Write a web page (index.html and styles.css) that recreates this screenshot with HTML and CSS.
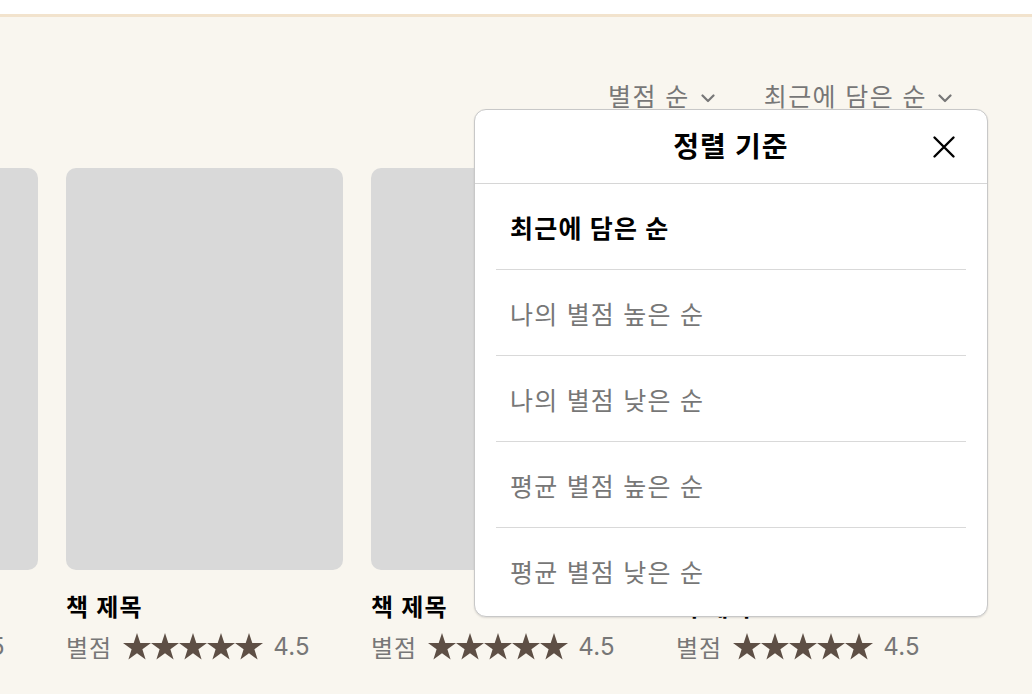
FILE: index.html
```html
<!DOCTYPE html>
<html lang="ko">
<head>
<meta charset="utf-8">
<title>정렬 기준</title>
<link rel="stylesheet" href="styles.css">
</head>
<body>
<div class="top-gap"></div>
<main class="page">
  <div class="toolbar">
    <button class="sort-btn"><span>별점 순</span>
      <svg class="chev" viewBox="0 0 14 9" width="14" height="9"><path d="M1.5 1.5 L7 7 L12.5 1.5" fill="none" stroke="currentColor" stroke-width="2.2" stroke-linecap="round" stroke-linejoin="round"/></svg>
    </button>
    <button class="sort-btn"><span>최근에 담은 순</span>
      <svg class="chev" viewBox="0 0 14 9" width="14" height="9"><path d="M1.5 1.5 L7 7 L12.5 1.5" fill="none" stroke="currentColor" stroke-width="2.2" stroke-linecap="round" stroke-linejoin="round"/></svg>
    </button>
  </div>

  <div class="shelf">
    <div class="track">
      <div class="book">
        <div class="cover"></div>
        <div class="title">책 제목</div>
        <div class="rating"><span class="label">별점</span><svg class="stars" viewBox="0 0 140 27" width="140" height="27"><g fill="#5e4f45"><polygon points="14,0 17.3,10 28,10 19.4,16.3 22.6,26.6 14,20.3 5.4,26.6 8.6,16.3 0,10 10.7,10"/><polygon transform="translate(28 0)" points="14,0 17.3,10 28,10 19.4,16.3 22.6,26.6 14,20.3 5.4,26.6 8.6,16.3 0,10 10.7,10"/><polygon transform="translate(56 0)" points="14,0 17.3,10 28,10 19.4,16.3 22.6,26.6 14,20.3 5.4,26.6 8.6,16.3 0,10 10.7,10"/><polygon transform="translate(84 0)" points="14,0 17.3,10 28,10 19.4,16.3 22.6,26.6 14,20.3 5.4,26.6 8.6,16.3 0,10 10.7,10"/><polygon transform="translate(112 0)" points="14,0 17.3,10 28,10 19.4,16.3 22.6,26.6 14,20.3 5.4,26.6 8.6,16.3 0,10 10.7,10"/></g></svg><span class="score">4.5</span></div>
      </div>
      <div class="book">
        <div class="cover"></div>
        <div class="title">책 제목</div>
        <div class="rating"><span class="label">별점</span><svg class="stars" viewBox="0 0 140 27" width="140" height="27"><g fill="#5e4f45"><polygon points="14,0 17.3,10 28,10 19.4,16.3 22.6,26.6 14,20.3 5.4,26.6 8.6,16.3 0,10 10.7,10"/><polygon transform="translate(28 0)" points="14,0 17.3,10 28,10 19.4,16.3 22.6,26.6 14,20.3 5.4,26.6 8.6,16.3 0,10 10.7,10"/><polygon transform="translate(56 0)" points="14,0 17.3,10 28,10 19.4,16.3 22.6,26.6 14,20.3 5.4,26.6 8.6,16.3 0,10 10.7,10"/><polygon transform="translate(84 0)" points="14,0 17.3,10 28,10 19.4,16.3 22.6,26.6 14,20.3 5.4,26.6 8.6,16.3 0,10 10.7,10"/><polygon transform="translate(112 0)" points="14,0 17.3,10 28,10 19.4,16.3 22.6,26.6 14,20.3 5.4,26.6 8.6,16.3 0,10 10.7,10"/></g></svg><span class="score">4.5</span></div>
      </div>
      <div class="book">
        <div class="cover"></div>
        <div class="title">책 제목</div>
        <div class="rating"><span class="label">별점</span><svg class="stars" viewBox="0 0 140 27" width="140" height="27"><g fill="#5e4f45"><polygon points="14,0 17.3,10 28,10 19.4,16.3 22.6,26.6 14,20.3 5.4,26.6 8.6,16.3 0,10 10.7,10"/><polygon transform="translate(28 0)" points="14,0 17.3,10 28,10 19.4,16.3 22.6,26.6 14,20.3 5.4,26.6 8.6,16.3 0,10 10.7,10"/><polygon transform="translate(56 0)" points="14,0 17.3,10 28,10 19.4,16.3 22.6,26.6 14,20.3 5.4,26.6 8.6,16.3 0,10 10.7,10"/><polygon transform="translate(84 0)" points="14,0 17.3,10 28,10 19.4,16.3 22.6,26.6 14,20.3 5.4,26.6 8.6,16.3 0,10 10.7,10"/><polygon transform="translate(112 0)" points="14,0 17.3,10 28,10 19.4,16.3 22.6,26.6 14,20.3 5.4,26.6 8.6,16.3 0,10 10.7,10"/></g></svg><span class="score">4.5</span></div>
      </div>
      <div class="book">
        <div class="cover"></div>
        <div class="title">책 제목</div>
        <div class="rating"><span class="label">별점</span><svg class="stars" viewBox="0 0 140 27" width="140" height="27"><g fill="#5e4f45"><polygon points="14,0 17.3,10 28,10 19.4,16.3 22.6,26.6 14,20.3 5.4,26.6 8.6,16.3 0,10 10.7,10"/><polygon transform="translate(28 0)" points="14,0 17.3,10 28,10 19.4,16.3 22.6,26.6 14,20.3 5.4,26.6 8.6,16.3 0,10 10.7,10"/><polygon transform="translate(56 0)" points="14,0 17.3,10 28,10 19.4,16.3 22.6,26.6 14,20.3 5.4,26.6 8.6,16.3 0,10 10.7,10"/><polygon transform="translate(84 0)" points="14,0 17.3,10 28,10 19.4,16.3 22.6,26.6 14,20.3 5.4,26.6 8.6,16.3 0,10 10.7,10"/><polygon transform="translate(112 0)" points="14,0 17.3,10 28,10 19.4,16.3 22.6,26.6 14,20.3 5.4,26.6 8.6,16.3 0,10 10.7,10"/></g></svg><span class="score">4.5</span></div>
      </div>
    </div>
  </div>

  <section class="sort-modal" role="dialog" aria-label="정렬 기준">
    <header class="modal-head">
      <h2 class="modal-title">정렬 기준</h2>
      <button class="close-btn" aria-label="닫기">
        <svg viewBox="0 0 24 24" width="24" height="24"><path d="M2.5 2.5 L21.5 21.5 M21.5 2.5 L2.5 21.5" fill="none" stroke="#000" stroke-width="2.4" stroke-linecap="round"/></svg>
      </button>
    </header>
    <ul class="options">
      <li class="option active">최근에 담은 순</li>
      <li class="option">나의 별점 높은 순</li>
      <li class="option">나의 별점 낮은 순</li>
      <li class="option">평균 별점 높은 순</li>
      <li class="option">평균 별점 낮은 순</li>
    </ul>
  </section>
</main>
</body>
</html>
```
FILE: styles.css
```css
* { box-sizing: border-box; }

html, body {
  margin: 0;
  padding: 0;
  background: #ffffff;
  overflow: hidden;
  height: 100%;
}

body {
  font-family: Inter, "Noto Sans CJK KR", sans-serif;
  color: #000;
}

.top-gap {
  height: 14px;
  background: #ffffff;
}

.page {
  position: relative;
  border-top: 3px solid #f2e3cd;
  background: #f9f6ef;
  height: calc(100% - 14px);
  overflow: hidden;
}

.toolbar {
  display: flex;
  justify-content: flex-end;
  align-items: center;
  gap: 49px;
  padding: 64px 80px 0 0;
  height: 96px;
}

.sort-btn {
  display: flex;
  align-items: center;
  gap: 11px;
  border: 0;
  background: none;
  padding: 0;
  font-family: inherit;
  font-size: 25px;
  letter-spacing: 1.4px;
  line-height: 32px;
  color: #777777;
  cursor: pointer;
}

.chev { display: block; margin-top: 2px; }

.shelf {
  margin-top: 55px;
}

.track {
  display: flex;
  gap: 28px;
  margin-left: -239px;
}

.book {
  flex: 0 0 277px;
  width: 277px;
}

.cover {
  height: 402px;
  border-radius: 10px;
  background: #d9d9d9;
}

.title {
  margin-top: 22px;
  font-size: 24px;
  letter-spacing: 1.2px;
  line-height: 32px;
  font-weight: 700;
  color: #000;
}

.rating {
  display: flex;
  align-items: center;
  margin-top: 6px;
  height: 32px;
  color: #777777;
  font-size: 24px;
}

.label { margin-right: 11px; letter-spacing: 1px; }

.stars { display: block; margin-right: 10px; }

.score { color: #777777; letter-spacing: 0.3px; }

.sort-modal {
  position: absolute;
  top: 92px;
  right: 44px;
  width: 514px;
  height: 508px;
  background: #ffffff;
  border: 1px solid #c8c8c8;
  border-radius: 12px;
  box-shadow: 0 1px 2px rgba(0, 0, 0, 0.12);
}

.modal-head {
  display: flex;
  align-items: center;
  justify-content: center;
  position: relative;
  height: 74px;
  border-bottom: 1px solid #d6d6d6;
}

.modal-title {
  margin: 0;
  font-size: 28px;
  letter-spacing: 1.2px;
  line-height: 36px;
  font-weight: 700;
  color: #000;
}

.close-btn {
  position: absolute;
  right: 31px;
  top: 50%;
  transform: translateY(-50%);
  border: 0;
  background: none;
  padding: 0;
  width: 24px;
  height: 24px;
  cursor: pointer;
}

.close-btn svg { display: block; }

.options {
  list-style: none;
  margin: 0;
  padding: 0 21px;
}

.option {
  display: flex;
  align-items: center;
  height: 86px;
  padding-left: 14px;
  border-bottom: 1px solid #d9d9d9;
  font-size: 25px;
  letter-spacing: 1.2px;
  color: #777777;
}

.option:last-child { border-bottom: 0; }

.option.active {
  color: #000;
  font-weight: 700;
}
```
